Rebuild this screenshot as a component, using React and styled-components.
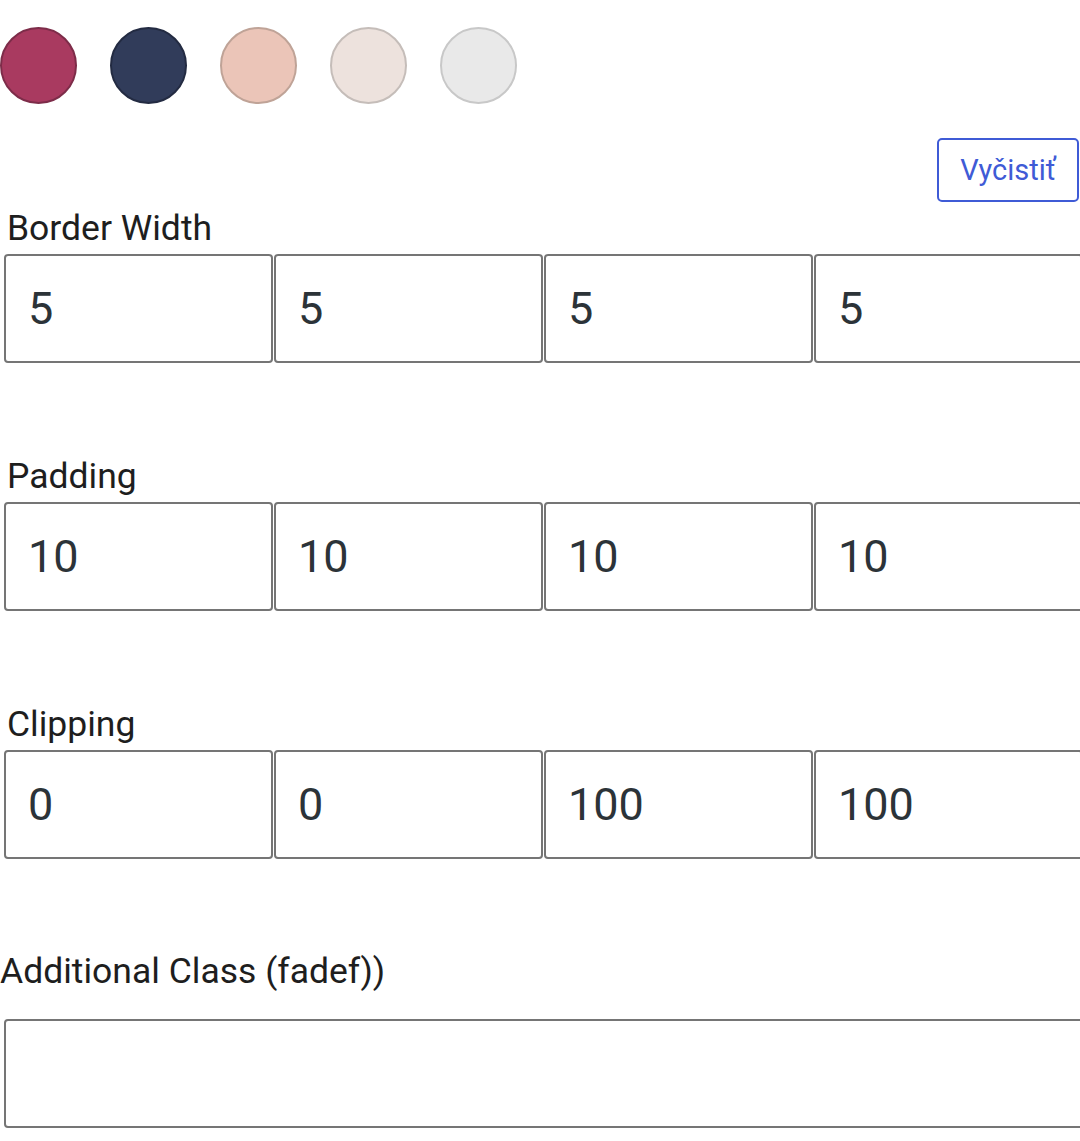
import React from "react";
import styled, { createGlobalStyle } from "styled-components";

const Global = createGlobalStyle`
  html, body { margin: 0; padding: 0; background: #fff; overflow: hidden; }
  body { font-family: Roboto, "Liberation Sans", Arial, sans-serif; }
`;

const Page = styled.div`
  width: 1080px;
  padding-top: 27px;
  box-sizing: border-box;
`;

const Swatches = styled.div`
  display: flex;
  gap: 33px;
`;

const Swatch = styled.button`
  width: 77px;
  height: 77px;
  border-radius: 50%;
  padding: 0;
  box-sizing: border-box;
  background: ${(p) => p.$fill};
  border: 2px solid ${(p) => p.$ring};
  cursor: pointer;
`;

const ClearRow = styled.div`
  display: flex;
  justify-content: flex-end;
  margin-top: 34px;
  padding-right: 1px;
`;

const ClearButton = styled.button`
  width: 142px;
  height: 64px;
  box-sizing: border-box;
  border: 2px solid #3f5bd6;
  border-radius: 5px;
  background: #fff;
  color: #3f5bd6;
  font-family: Roboto, "Liberation Sans", Arial, sans-serif;
  font-size: 29px;
  padding: 0;
`;

const Field = styled.div`
  margin-top: ${(p) => p.$top}px;
  padding-left: 4px;
`;

const Label = styled.div`
  font-size: 35.5px;
  line-height: 42px;
  color: #1e1e1e;
  margin-bottom: ${(p) => p.$gap}px;
  margin-left: ${(p) => p.$shift}px;
`;

const Grid = styled.div`
  display: grid;
  grid-template-columns: repeat(4, 269px);
  gap: 1px;
  width: 1100px;
`;

const Box = styled.input`
  box-sizing: border-box;
  height: 109px;
  width: ${(p) => (p.$wide ? "1100px" : "269px")};
  border: 2px solid #757575;
  border-radius: 4px;
  padding: 0 0 0 22px;
  margin: 0;
  font-family: Roboto, "Liberation Sans", Arial, sans-serif;
  font-size: 45px;
  color: #2c3338;
  background: #fff;
  outline: none;
  display: block;
`;

const swatches = [
  { fill: "#a93a60", ring: "#7d2c49" },
  { fill: "#313c5a", ring: "#232b42" },
  { fill: "#ebc5b8", ring: "#bfa397" },
  { fill: "#ede2dd", ring: "#c5bdb9" },
  { fill: "#e9e9e9", ring: "#c8c8c8" },
];

const groups = [
  { label: "Border Width", values: ["5", "5", "5", "5"], top: 5 },
  { label: "Padding", values: ["10", "10", "10", "10"], top: 92 },
  { label: "Clipping", values: ["0", "0", "100", "100"], top: 92 },
];

export default function App() {
  return (
    <>
      <Global />
      <Page>
        <Swatches>
          {swatches.map((s, i) => (
            <Swatch key={i} $fill={s.fill} $ring={s.ring} aria-label={`Color ${i + 1}`} />
          ))}
        </Swatches>
        <ClearRow>
          <ClearButton>Vyčistiť</ClearButton>
        </ClearRow>
        {groups.map((g) => (
          <Field key={g.label} $top={g.top}>
            <Label $gap={5} $shift={3}>
              {g.label}
            </Label>
            <Grid>
              {g.values.map((v, i) => (
                <Box key={i} defaultValue={v} />
              ))}
            </Grid>
          </Field>
        ))}
        <Field $top={91}>
          <Label $gap={27} $shift={-4}>
            Additional Class (fadef))
          </Label>
          <Box $wide defaultValue="" />
        </Field>
      </Page>
    </>
  );
}
